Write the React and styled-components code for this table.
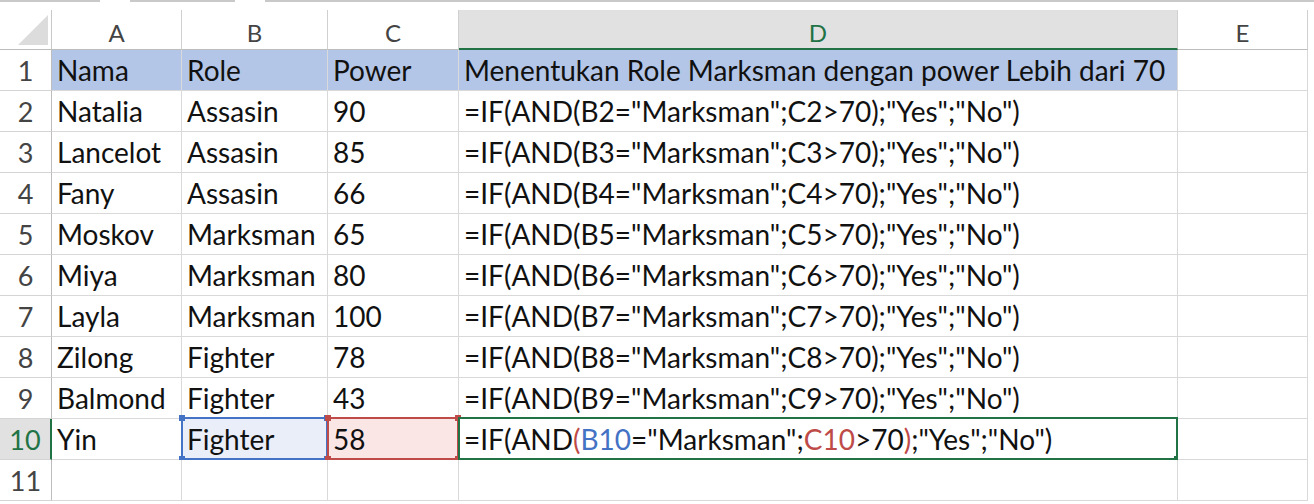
import styled, { createGlobalStyle } from "styled-components";

const Global = createGlobalStyle`
  html, body {
    margin: 0;
    padding: 0;
    background: #ffffff;
  }
  body {
    font-family: Lato, "Liberation Sans", sans-serif;
  }
`;

const Sheet = styled.div`
  width: 1314px;
  height: 504px;
  overflow: hidden;
  background: #fff;
`;

const TopStrip = styled.div`
  display: flex;
  gap: 30px;
  height: 10px;
`;
const StripSeg = styled.div`
  height: 2px;
  width: ${(p) => p.w}px;
  background: #c9c9c9;
`;

const Grid = styled.div`
  display: grid;
  grid-template-columns: 52px 130px 146px 131px 719px 130px 6px;
  grid-template-rows: 40px repeat(11, 41px);
`;

const Corner = styled.div`
  border-right: 1px solid #c8c8c8;
  border-bottom: 1px solid #bdbdbd;
  box-sizing: border-box;
  display: flex;
  align-items: flex-end;
  justify-content: flex-end;
  padding: 0 3px 4px 0;
`;

const ColHead = styled.div`
  box-sizing: border-box;
  border-right: 1px solid #d0d0d0;
  border-bottom: ${(p) => (p.active ? "2px solid #217346" : "1px solid #bdbdbd")};
  background: ${(p) => (p.active ? "#e1e1e1" : "#fff")};
  color: ${(p) => (p.active ? "#217346" : "#444")};
  font-size: 24px;
  display: flex;
  align-items: center;
  justify-content: center;
  padding-top: 6px;
`;

const RowHead = styled.div`
  box-sizing: border-box;
  border-bottom: 1px solid #d4d4d4;
  border-right: ${(p) => (p.active ? "2px solid #217346" : "1px solid #bdbdbd")};
  background: ${(p) => (p.active ? "#e1e1e1" : "#fff")};
  color: ${(p) => (p.active ? "#217346" : "#444")};
  font-size: 27px;
  line-height: 41px;
  text-align: center;
`;

const Cell = styled.div`
  position: relative;
  box-sizing: border-box;
  border-right: 1px solid #d9d9d9;
  border-bottom: 1px solid #d9d9d9;
  background: ${(p) => p.fill || "#fff"};
  font-size: 28px;
  line-height: 41px;
  padding-left: 5px;
  color: #111;
  white-space: nowrap;
`;

const Ring = styled.div`
  position: absolute;
  left: -1px;
  top: -2px;
  right: -1px;
  bottom: -1px;
  border: 2px solid ${(p) => p.color};
  pointer-events: none;
`;

const Handle = styled.span`
  position: absolute;
  width: 6px;
  height: 6px;
  background: ${(p) => p.color};
  ${(p) => (p.t ? "top: -4px;" : "bottom: -4px;")}
  ${(p) => (p.l ? "left: -4px;" : "right: -4px;")}
`;

const Ref = styled.span`
  color: ${(p) => p.c};
`;

const cols = ["A", "B", "C", "D", "E"];
const rows = [
  ["Nama", "Role", "Power", "Menentukan Role Marksman dengan power Lebih dari 70"],
  ["Natalia", "Assasin", "90"],
  ["Lancelot", "Assasin", "85"],
  ["Fany", "Assasin", "66"],
  ["Moskov", "Marksman", "65"],
  ["Miya", "Marksman", "80"],
  ["Layla", "Marksman", "100"],
  ["Zilong", "Fighter", "78"],
  ["Balmond", "Fighter", "43"],
];

const BLUE = "#4472c4";
const RED = "#be4b48";
const GREEN = "#217346";

function Corners({ color }) {
  return (
    <>
      <Handle color={color} t l />
      <Handle color={color} t />
      <Handle color={color} l />
      <Handle color={color} />
    </>
  );
}

export default function App() {
  return (
    <Sheet>
      <Global />
      <TopStrip>
        <StripSeg w={105} />
        <StripSeg w={110} />
        <StripSeg w={1100} />
      </TopStrip>
      <Grid>
        <Corner>
          <svg width="30" height="30" viewBox="0 0 30 30">
            <polygon points="30,0 30,30 0,30" fill="#dcdcdc" />
          </svg>
        </Corner>
        {cols.map((c) => (
          <ColHead key={c} active={c === "D"}>
            {c}
          </ColHead>
        ))}
        <div />

        {rows.map((r, i) => {
          const n = i + 1;
          const fill = n === 1 ? "#b4c6e7" : undefined;
          return [
            <RowHead key={`h${n}`}>{n}</RowHead>,
            <Cell key={`a${n}`} fill={fill}>{r[0]}</Cell>,
            <Cell key={`b${n}`} fill={fill}>{r[1]}</Cell>,
            <Cell key={`c${n}`} fill={fill}>{r[2]}</Cell>,
            <Cell key={`d${n}`} fill={fill}>
              {n === 1
                ? r[3]
                : `=IF(AND(B${n}="Marksman";C${n}>70);"Yes";"No")`}
            </Cell>,
            <Cell key={`e${n}`} />,
            <div key={`x${n}`} />,
          ];
        })}

        <RowHead active>10</RowHead>
        <Cell>Yin</Cell>
        <Cell fill="#e9eef8">
          Fighter
          <Ring color={BLUE}>
            <Corners color={BLUE} />
          </Ring>
        </Cell>
        <Cell fill="#fbe6e6">
          58
          <Ring color={RED}>
            <Corners color={RED} />
          </Ring>
        </Cell>
        <Cell>
          =IF(AND<Ref c={RED}>(</Ref>
          <Ref c={BLUE}>B10</Ref>="Marksman";<Ref c={RED}>C10</Ref>&gt;70
          <Ref c={RED}>)</Ref>;"Yes";"No")
          <Ring color={GREEN}>
            <Handle color={GREEN} />
          </Ring>
        </Cell>
        <Cell />
        <div />

        <RowHead>11</RowHead>
        <Cell />
        <Cell />
        <Cell />
        <Cell />
        <Cell />
        <div />
      </Grid>
    </Sheet>
  );
}
